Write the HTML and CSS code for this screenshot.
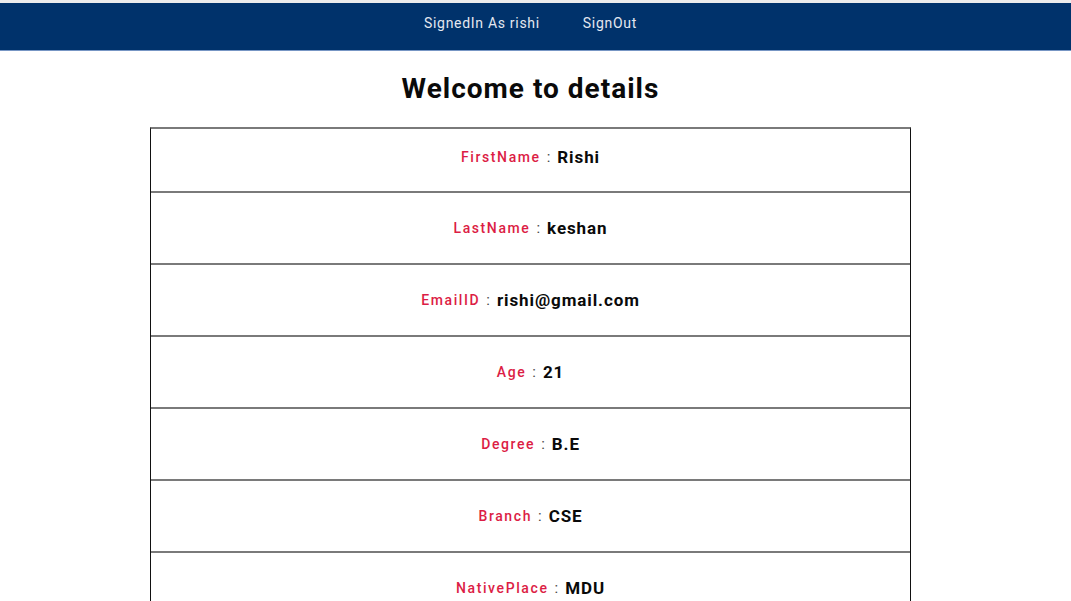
FILE: index.html
```html
<!DOCTYPE html>
<html lang="en">
<head>
<meta charset="utf-8">
<title>Details</title>
<link rel="stylesheet" href="styles.css">
</head>
<body>
<header class="topbar">
  <nav class="nav">
    <a class="nav-link" href="#">SignedIn As rishi</a>
    <a class="nav-link" href="#">SignOut</a>
  </nav>
</header>
<main class="content">
  <h1 class="title">Welcome to details</h1>
  <div class="details">
    <div class="row row-first"><span class="label">FirstName</span><span class="sep">:</span><span class="value">Rishi</span></div>
    <div class="row"><span class="label">LastName</span><span class="sep">:</span><span class="value">keshan</span></div>
    <div class="row"><span class="label">EmailID</span><span class="sep">:</span><span class="value">rishi@gmail.com</span></div>
    <div class="row"><span class="label">Age</span><span class="sep">:</span><span class="value">21</span></div>
    <div class="row"><span class="label">Degree</span><span class="sep">:</span><span class="value">B.E</span></div>
    <div class="row"><span class="label">Branch</span><span class="sep">:</span><span class="value">CSE</span></div>
    <div class="row"><span class="label">NativePlace</span><span class="sep">:</span><span class="value">MDU</span></div>
  </div>
</main>
</body>
</html>
```
FILE: styles.css
```css
* { box-sizing: border-box; }
html, body { margin: 0; padding: 0; background: #ffffff; }
body { font-family: Roboto, "Liberation Sans", sans-serif; color: #111; }

.topbar {
  border-top: 3px solid #ececec;
  background: #00326b;
  border-bottom: 1px solid #7796c4;
  height: 51px;
}
.nav {
  display: flex;
  justify-content: center;
  gap: 43px;
  padding-top: 12px;
  padding-right: 10px;
}
.nav-link {
  color: #e4e8f0;
  text-decoration: none;
  font-size: 14px;
  letter-spacing: 0.7px;
  line-height: 17px;
}

.content {
  display: flex;
  flex-direction: column;
  align-items: center;
  padding-right: 10px;
}
.title {
  margin: 21px 0 0;
  font-size: 28px;
  font-weight: 700;
  letter-spacing: 1px;
  line-height: 34px;
  color: #0a0a0a;
}
.details {
  margin-top: 21px;
  width: 761px;
  border-left: 1px solid #111;
  border-right: 1px solid #111;
  border-top: 2px solid #7a7a7a;
}
.row {
  height: 72px;
  border-bottom: 2px solid #7a7a7a;
  display: flex;
  align-items: center;
  justify-content: center;
}
.row-first { height: 64px; padding-bottom: 6px; }
.label {
  color: #dc1d45;
  font-size: 14px;
  font-weight: 500;
  letter-spacing: 1.6px;
}
.sep {
  color: #444;
  font-size: 15px;
  margin: 0 7px 0 6px;
}
.value {
  color: #0a0a0a;
  font-size: 17px;
  font-weight: 700;
  letter-spacing: 0.9px;
}
```
